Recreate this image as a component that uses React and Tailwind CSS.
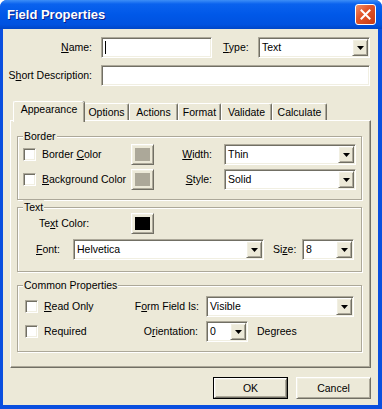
const SUNKEN =
  "border border-t-[#ACA899] border-l-[#ACA899] border-b-white border-r-white shadow-[inset_1px_1px_0_#716F64,inset_-1px_-1px_0_#F1EFE2]";
const RAISED =
  "border border-t-white border-l-white border-b-[#716F64] border-r-[#716F64] shadow-[inset_1px_1px_0_#F1EFE2,inset_-1px_-1px_0_#ACA899]";

function Arrow() {
  return (
    <svg width="7" height="4" viewBox="0 0 7 4">
      <polygon points="0,0 7,0 3.5,4" fill="#000" />
    </svg>
  );
}

function Select({ value, className = "" }) {
  return (
    <div className={`${SUNKEN} bg-white h-[21px] flex items-center p-[1px] ${className}`}>
      <span className="flex-1 pl-[2px] truncate">{value}</span>
      <div className={`${RAISED} bg-[#ECE9D8] w-[16px] h-[17px] flex items-center justify-center shrink-0`}>
        <Arrow />
      </div>
    </div>
  );
}

function Check() {
  return <div className={`${SUNKEN} bg-white w-[13px] h-[13px] shrink-0`} />;
}

function Swatch({ color }) {
  return (
    <div className={`${RAISED} bg-[#ECE9D8] w-[23px] h-[21px] flex items-center justify-center shrink-0`}>
      <div className={`w-[15px] h-[13px] ${color}`} />
    </div>
  );
}

function Group({ label, className = "", children }) {
  return (
    <div className={`relative border border-[#ACA899] shadow-[inset_1px_1px_0_#fff,1px_1px_0_#fff] ml-[6px] w-[345px] ${className}`}>
      <span className="absolute left-[5px] -top-[8px] bg-[#ECE9D8] px-[1px] leading-[14px]">{label}</span>
      {children}
    </div>
  );
}

function Tab({ label, active, className = "" }) {
  if (active) {
    return (
      <div className={`relative z-10 -mb-[2px] h-[21px] bg-[#ECE9D8] border-t border-l border-white shadow-[1px_0_0_#716F64,inset_-1px_0_0_#ACA899] rounded-t-[2px] flex items-start justify-center pt-[2px] ${className}`}>
        {label}
      </div>
    );
  }
  return (
    <div className={`h-[17px] bg-[#ECE9D8] border-t border-l border-white border-r border-r-[#716F64] shadow-[inset_-1px_0_0_#ACA899] rounded-t-[2px] flex items-center justify-center pt-[1px] ${className}`}>
      {label}
    </div>
  );
}

export default function App() {
  return (
    <div className="w-[382px] h-[409px] bg-white font-['Liberation_Sans',Arial,sans-serif] text-[10.5px] text-black leading-none select-none whitespace-nowrap">
      <div className="w-full h-full flex flex-col bg-[#0A4FDF] rounded-t-[7px] overflow-hidden">
        <div className="h-[29px] shrink-0 flex items-center justify-between pl-[7px] pr-[6px] bg-[linear-gradient(to_bottom,#3D8EF7_0%,#0A62EE_14%,#0058E8_50%,#0052E0_85%,#0046C7_100%)]">
          <span className="text-white font-bold text-[13px] [text-shadow:1px_1px_0_#0A1E8A] pb-[1px]">Field Properties</span>
          <div className="w-[21px] h-[21px] rounded-[3px] border border-white bg-[linear-gradient(135deg,#F0906A_0%,#E2562B_40%,#C83A12_100%)] flex items-center justify-center">
            <svg width="11" height="11" viewBox="0 0 11 11">
              <path d="M1.5 1.5 L9.5 9.5 M9.5 1.5 L1.5 9.5" stroke="#fff" strokeWidth="2" strokeLinecap="square" />
            </svg>
          </div>
        </div>

        <div className="flex-1 mx-[3px] mr-[4px] mb-[4px] bg-[#ECE9D8] flex flex-col">
          <div className="flex items-center h-[21px] mt-[8px]">
            <div className="w-[89px] text-right">
              <u>N</u>ame:
            </div>
            <div className={`${SUNKEN} bg-white h-[21px] w-[111px] ml-[9px] flex items-center pl-[3px]`}>
              <div className="w-[1px] h-[13px] bg-black" />
            </div>
            <div className="w-[35px] ml-[11px]">
              <u>T</u>ype:
            </div>
            <Select value="Text" className="w-[112px]" />
          </div>

          <div className="flex items-center h-[21px] mt-[7px]">
            <div className="w-[89px] text-right">
              S<u>h</u>ort Description:
            </div>
            <div className={`${SUNKEN} bg-white h-[21px] w-[269px] ml-[9px]`} />
          </div>

          <div className="flex items-end h-[19px] mt-[15px] ml-[10px] relative z-10">
            <Tab label="Appearance" active className="w-[71px]" />
            <Tab label="Options" className="w-[45px]" />
            <Tab label="Actions" className="w-[49px]" />
            <Tab label="Format" className="w-[43px]" />
            <Tab label="Validate" className="w-[51px]" />
            <Tab label="Calculate" className="w-[55px]" />
          </div>

          <div className="ml-[7px] w-[361px] h-[248px] bg-[#ECE9D8] border border-t-white border-l-white border-b-[#716F64] border-r-[#716F64] shadow-[inset_-1px_-1px_0_#ACA899] pt-[15px]">
            <Group label="Border" className="h-[64px]">
              <div className="flex items-center h-[21px] mt-[7px] pl-[5px]">
                <Check />
                <div className="ml-[6px] w-[89px]">
                  Border <u>C</u>olor
                </div>
                <Swatch color="bg-[#ACA899]" />
                <div className="w-[58px] text-right">
                  <u>W</u>idth:
                </div>
                <Select value="Thin" className="w-[132px] ml-[12px]" />
              </div>
              <div className="flex items-center h-[21px] mt-[4px] pl-[5px]">
                <Check />
                <div className="ml-[6px] w-[89px]">
                  <u>B</u>ackground Color
                </div>
                <Swatch color="bg-[#ACA899]" />
                <div className="w-[58px] text-right">
                  <u>S</u>tyle:
                </div>
                <Select value="Solid" className="w-[132px] ml-[12px]" />
              </div>
            </Group>

            <Group label="Text" className="h-[65px] mt-[7px]">
              <div className="flex items-center h-[21px] mt-[5px] pl-[21px]">
                <div className="w-[92px]">
                  Te<u>x</u>t Color:
                </div>
                <Swatch color="bg-black" />
              </div>
              <div className="flex items-center h-[21px] mt-[5px] pl-[18px]">
                <div className="w-[37px]">
                  <u>F</u>ont:
                </div>
                <Select value="Helvetica" className="w-[191px]" />
                <div className="ml-[9px] w-[29px]">
                  Si<u>z</u>e:
                </div>
                <Select value="8" className="w-[52px]" />
              </div>
            </Group>

            <Group label="Common Properties" className="h-[67px] mt-[13px]">
              <div className="flex items-center h-[21px] mt-[10px] pl-[7px]">
                <Check />
                <div className="ml-[6px] w-[85px]">
                  <u>R</u>ead Only
                </div>
                <div className="w-[77px] text-right pr-[7px]">
                  F<u>o</u>rm Field Is:
                </div>
                <Select value="Visible" className="w-[148px]" />
              </div>
              <div className="flex items-center h-[21px] mt-[4px] pl-[7px]">
                <Check />
                <div className="ml-[6px] w-[85px]">Required</div>
                <div className="w-[77px] text-right pr-[8px]">
                  O<u>r</u>ientation:
                </div>
                <Select value="0" className="w-[42px]" />
                <div className="ml-[9px]">Degrees</div>
              </div>
            </Group>
          </div>

          <div className="flex items-center mt-[9px] ml-[210px] gap-[8px]">
            <div className="w-[75px] h-[22px] border border-black">
              <div className={`${RAISED} bg-[#ECE9D8] w-full h-full flex items-center justify-center`}>OK</div>
            </div>
            <div className={`${RAISED} bg-[#ECE9D8] w-[75px] h-[22px] flex items-center justify-center`}>Cancel</div>
          </div>
        </div>
      </div>
    </div>
  );
}
